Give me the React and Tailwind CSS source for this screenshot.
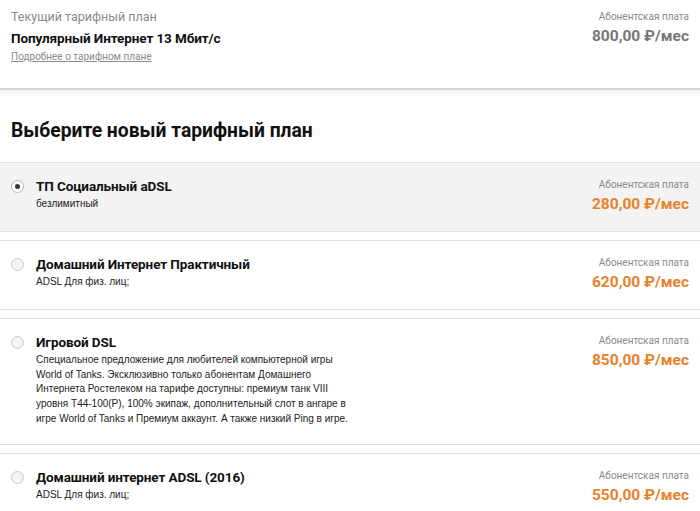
import React from "react";

const plans = [
  { title: "ТП Социальный aDSL", desc: "безлимитный", price: "280,00", selected: true },
  { title: "Домашний Интернет Практичный", desc: "ADSL Для физ. лиц;", price: "620,00" },
  {
    title: "Игровой DSL",
    desc:
      "Специальное предложение для любителей компьютерной игры World of Tanks. Эксклюзивно только абонентам Домашнего Интернета Ростелеком на тарифе доступны: премиум танк VIII уровня T44-100(Р), 100% экипаж, дополнительный слот в ангаре в игре World of Tanks и Премиум аккаунт. А также низкий Ping в игре.",
    price: "850,00",
  },
  { title: "Домашний интернет ADSL (2016)", desc: "ADSL Для физ. лиц;", price: "550,00" },
];

function Radio({ checked }) {
  return (
    <div
      className={
        "mt-[3px] flex h-[13px] w-[13px] shrink-0 items-center justify-center rounded-full border " +
        (checked ? "border-[#b5b5b5] bg-white" : "border-[#c8c8c8] bg-[#f4f4f4]")
      }
    >
      {checked && <div className="h-[5px] w-[5px] rounded-full bg-[#333]" />}
    </div>
  );
}

function Price({ value, color }) {
  return (
    <div className="flex flex-col items-end">
      <div className="font-['Roboto',sans-serif] text-[10px] leading-[13px] text-[#8a8a8a]">
        Абонентская плата
      </div>
      <div
        className={
          "mt-[3px] font-['Roboto',sans-serif] text-[15.5px] font-bold leading-[20px] " + color
        }
      >
        {value} ₽/мес
      </div>
    </div>
  );
}

function Plan({ p }) {
  return (
    <div
      className={
        "flex justify-between border-y border-[#e2e2e2] px-[11px] pt-[14px] pb-[17px] " +
        (p.selected ? "bg-[#f3f3f3]" : "bg-white")
      }
    >
      <div className="flex gap-[12px]">
        <Radio checked={p.selected} />
        <div className="max-w-[314px]">
          <div className="font-['Roboto',sans-serif] text-[13.5px] font-bold leading-[18px] tracking-[-0.1px] text-[#111]">
            {p.title}
          </div>
          <div className="mt-[2px] font-['Liberation_Sans',Arial,sans-serif] text-[10px] leading-[14.7px] text-[#222]">
            {p.desc}
          </div>
        </div>
      </div>
      <div className="pt-[1px]">
        <Price value={p.price} color="text-[#e8822a]" />
      </div>
    </div>
  );
}

export default function App() {
  return (
    <div className="h-[511px] w-[700px] overflow-hidden bg-white">
      <div className="flex h-[88px] justify-between px-[11px] pt-[9px]">
        <div>
          <div className="font-['Roboto',sans-serif] text-[12.5px] leading-[16px] text-[#8a8a8a]">
            Текущий тарифный план
          </div>
          <div className="mt-[4px] font-['Roboto',sans-serif] text-[13.5px] font-bold leading-[18px] tracking-[-0.1px] text-[#111]">
            Популярный Интернет 13 Мбит/с
          </div>
          <div className="mt-[3px] font-['Roboto',sans-serif] text-[10px] leading-[14px] text-[#8a8a8a] underline">
            Подробнее о тарифном плане
          </div>
        </div>
        <div className="pt-[1px]">
          <Price value="800,00" color="text-[#777]" />
        </div>
      </div>
      <div className="h-[2px] bg-[#d4d4d4]" />
      <div className="bg-gradient-to-b from-[#f2f2f2] to-white to-[8px] px-[11px] pt-[28px] pb-[18px]">
        <h1 className="font-['Roboto',sans-serif] text-[19.3px] font-bold leading-[26px] text-[#111]">
          Выберите новый тарифный план
        </h1>
      </div>
      <div className="flex flex-col gap-[8px]">
        {plans.map((p) => (
          <Plan key={p.title} p={p} />
        ))}
      </div>
    </div>
  );
}
